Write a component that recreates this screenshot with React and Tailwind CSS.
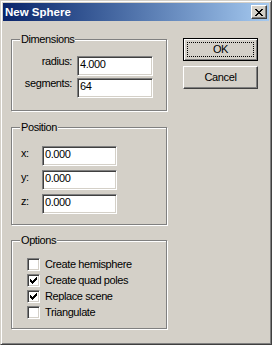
const font = "font-['Liberation_Sans',Arial,sans-serif]";

function GroupBox({ title, className, children }) {
  return (
    <div
      className={`relative w-[156px] border border-[#808080] shadow-[inset_1px_1px_#fff,1px_1px_#fff] ${className}`}
    >
      <div className="absolute left-[8px] top-[-7px] bg-[#d4d0c8] px-[1px] leading-[13px]">{title}</div>
      {children}
    </div>
  );
}

function Field({ value, width = "w-[75px]" }) {
  return (
    <div
      className={`${width} h-[20px] bg-white border border-t-[#808080] border-l-[#808080] border-b-white border-r-white shadow-[inset_1px_1px_#404040,inset_-1px_-1px_#d4d0c8] pl-[2px] pt-[1px] leading-[13px]`}
    >
      {value}
    </div>
  );
}

function CheckBox({ label, checked }) {
  return (
    <div className="flex items-start h-[13px]">
      <div className="w-[13px] h-[13px] bg-white border border-t-[#808080] border-l-[#808080] border-b-white border-r-white shadow-[inset_1px_1px_#404040,inset_-1px_-1px_#d4d0c8] flex items-center justify-center">
        {checked && (
          <svg width="7" height="7" viewBox="0 0 7 7" shapeRendering="crispEdges">
            <path
              d="M6 0h1v1H6z M5 1h2v1H5z M0 2h1v1H0z M4 2h3v1H4z M0 3h2v1H0z M3 3h3v1H3z M0 4h5v1H0z M1 5h3v1H1z M2 6h1v1H2z"
              fill="#000"
            />
          </svg>
        )}
      </div>
      <span className="ml-[5px] leading-[13px]">{label}</span>
    </div>
  );
}

export default function App() {
  return (
    <div
      className={`${font} text-[11px] tracking-[-0.4px] text-black w-[272px] h-[345px] bg-[#d4d0c8] border border-t-[#d4d0c8] border-l-[#d4d0c8] border-r-[#404040] border-b-[#404040] shadow-[inset_1px_1px_#fff,inset_-1px_-1px_#808080] p-[2px] flex flex-col`}
    >
      {/* Title bar */}
      <div className="h-[18px] flex items-center bg-linear-to-r from-[#0a246a] to-[#a6caf0]">
        <span className="pl-[2px] text-white font-bold text-[11.5px] tracking-normal leading-[14px]">New Sphere</span>
        <button className="ml-auto mr-[2px] w-[16px] h-[14px] bg-[#d4d0c8] border border-t-white border-l-white border-r-[#404040] border-b-[#404040] shadow-[inset_-1px_-1px_#808080] flex items-center justify-center">
          <svg width="8" height="7" viewBox="0 0 8 7" shapeRendering="crispEdges">
            <path
              d="M0 0h2v1H0z M6 0h2v1H6z M1 1h2v1H1z M5 1h2v1H5z M2 2h4v1H2z M3 3h2v1H3z M2 4h4v1H2z M1 5h2v1H1z M5 5h2v1H5z M0 6h2v1H0z M6 6h2v1H6z"
              fill="#000"
            />
          </svg>
        </button>
      </div>

      <div className="flex items-start pt-[17px] pl-[8px]">
        {/* Left column */}
        <div className="mt-[1px] flex flex-col">
          <GroupBox title="Dimensions" className="h-[72px]">
            <div className="flex flex-col gap-[2px] pt-[16px]">
              <div className="flex items-start">
                <span className="w-[60px] text-right -mt-[1px] leading-[13px]">radius:</span>
                <div className="ml-[5px]">
                  <Field value="4.000" width="w-[76px]" />
                </div>
              </div>
              <div className="flex items-start">
                <span className="w-[60px] text-right -mt-[1px] leading-[13px]">segments:</span>
                <div className="ml-[5px]">
                  <Field value="64" width="w-[76px]" />
                </div>
              </div>
            </div>
          </GroupBox>

          <GroupBox title="Position" className="h-[98px] mt-[16px]">
            <div className="flex flex-col gap-[4px] pt-[18px] pl-[9px]">
              {["x:", "y:", "z:"].map((l) => (
                <div key={l} className="flex items-start">
                  <span className="w-[21px] mt-[1px] leading-[13px]">{l}</span>
                  <Field value="0.000" />
                </div>
              ))}
            </div>
          </GroupBox>

          <GroupBox title="Options" className="h-[89px] mt-[15px]">
            <div className="flex flex-col gap-[3px] pt-[17px] pl-[15px]">
              <CheckBox label="Create hemisphere" />
              <CheckBox label="Create quad poles" checked />
              <CheckBox label="Replace scene" checked />
              <CheckBox label="Triangulate" />
            </div>
          </GroupBox>
        </div>

        {/* Buttons */}
        <div className="ml-[16px] flex flex-col gap-[5px]">
          <button className="w-[75px] h-[23px] bg-[#d4d0c8] border border-black shadow-[inset_1px_1px_#fff,inset_-1px_-1px_#808080] p-[3px] flex">
            <span className="flex-1 border border-dotted border-black flex items-center justify-center leading-[13px]">
              OK
            </span>
          </button>
          <button className="w-[75px] h-[23px] bg-[#d4d0c8] border border-t-white border-l-white border-r-[#404040] border-b-[#404040] shadow-[inset_-1px_-1px_#808080] flex items-center justify-center leading-[13px]">
            Cancel
          </button>
        </div>
      </div>
    </div>
  );
}
